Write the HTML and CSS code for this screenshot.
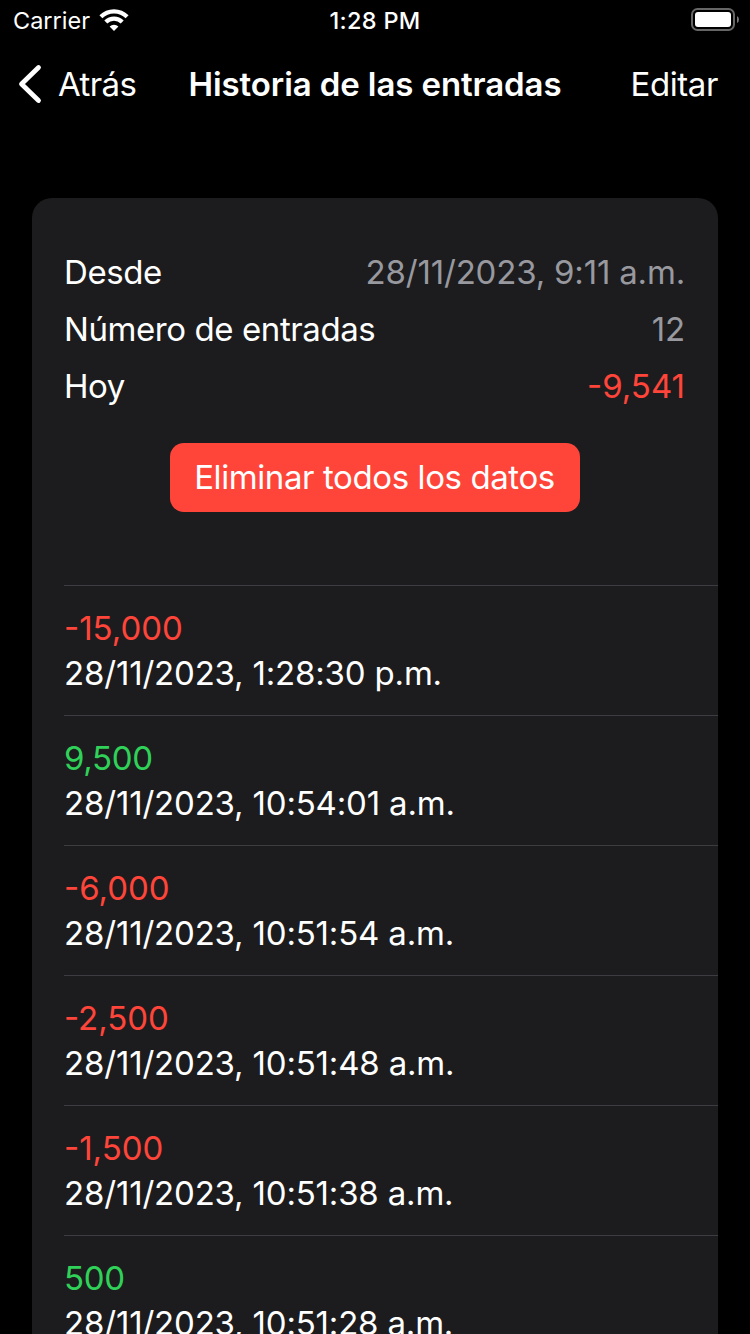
FILE: index.html
```
<!DOCTYPE html>
<html lang="es">
<head>
<meta charset="utf-8">
<title>Historia de las entradas</title>
<link rel="stylesheet" href="styles.css">
</head>
<body>
<div class="status-bar">
  <div class="carrier"><span class="carrier-name">Carrier</span>
    <svg class="wifi" width="30" height="22" viewBox="0 0 30 22" fill="none" stroke="#fff" stroke-width="4.200">
      <path d="M1.9 7.800A18.600 18.600 0 0 1 28.100 7.800"/>
      <path d="M6.800 13.100A11.600 11.600 0 0 1 23.200 13.100"/>
      <path d="M10.600 17.500A6.600 6.600 0 0 1 19.400 17.500L15 22Z" fill="#fff" stroke="none"/>
    </svg>
  </div>
  <span class="clock">1:28 PM</span>
  <svg class="battery" width="48" height="23" viewBox="0 0 48 23">
    <rect x="1" y="1" width="42" height="21" rx="5.5" fill="none" stroke="#666" stroke-width="2"/>
    <rect x="4" y="4" width="36" height="15" rx="3" fill="#fff"/>
    <path d="M46 8v7Q48 14 48 11.500T46 8Z" fill="#777"/>
  </svg>
</div>
<header class="nav">
  <a class="back">
    <svg class="chevron" width="24" height="40" viewBox="0 0 24 40" fill="none" stroke="#fff" stroke-width="4.800" stroke-linecap="round" stroke-linejoin="round"><path d="M20.500 3.500L3.500 20L20.500 36.500"/></svg>
    <span class="back-label">Atrás</span>
  </a>
  <h1 class="title">Historia de las entradas</h1>
  <a class="edit">Editar</a>
</header>
<main class="card">
  <section class="summary">
    <div class="line"><span class="label">Desde</span><span class="value">28/11/2023, 9:11 a.m.</span></div>
    <div class="line"><span class="label">Número de entradas</span><span class="value">12</span></div>
    <div class="line"><span class="label">Hoy</span><span class="negative">-9,541</span></div>
    <button class="delete">Eliminar todos los datos</button>
  </section>
  <ul class="entries">
    <li class="entry"><span class="negative">-15,000</span><span class="date">28/11/2023, 1:28:30 p.m.</span></li>
    <li class="entry"><span class="positive">9,500</span><span class="date">28/11/2023, 10:54:01 a.m.</span></li>
    <li class="entry"><span class="negative">-6,000</span><span class="date">28/11/2023, 10:51:54 a.m.</span></li>
    <li class="entry"><span class="negative">-2,500</span><span class="date">28/11/2023, 10:51:48 a.m.</span></li>
    <li class="entry"><span class="negative">-1,500</span><span class="date">28/11/2023, 10:51:38 a.m.</span></li>
    <li class="entry"><span class="positive">500</span><span class="date">28/11/2023, 10:51:28 a.m.</span></li>
  </ul>
</main>
</body>
</html>
```
FILE: styles.css
```
* { box-sizing: border-box; }
html, body { margin: 0; height: 1334px; overflow: hidden; }
body {
  width: 750px;
  display: flex;
  flex-direction: column;
  background: #000;
  color: #fff;
  font: 400 33px/45px Inter, "Liberation Sans", sans-serif;
  white-space: nowrap;
}
.status-bar {
  flex: none;
  display: grid;
  grid-template-columns: minmax(0, 1fr) auto minmax(0, 1fr);
  align-items: start;
  height: 40px;
  padding: 0 11px 0 13px;
  font-size: 23.500px;
  line-height: 42px;
}
.carrier { display: flex; align-items: flex-start; gap: 9px; }
.wifi { margin-top: 9px; }
.clock { font-weight: 500; letter-spacing: 0.3px; margin-right: 2px; }
.battery { justify-self: end; margin-top: 8px; }
.nav {
  flex: none;
  display: grid;
  grid-template-columns: minmax(0, 1fr) auto minmax(0, 1fr);
  align-items: center;
  height: 88px;
  padding: 0 18px;
}
.back { display: flex; align-items: center; gap: 16px; letter-spacing: -0.6px; }
.title { margin: 0; font-size: 33px; font-weight: 600; letter-spacing: -0.1px; }
.edit { justify-self: end; margin-right: 14px; letter-spacing: -0.4px; }
.card {
  flex: 1 0 auto;
  margin: 70px 32px 0;
  border-radius: 20px 20px 0 0;
  background: #1c1c1e;
}
.summary {
  display: flex;
  flex-direction: column;
  gap: 16px;
  height: 387px;
  padding: 54px 33px 0 32px;
  line-height: 41px;
}
.line { display: flex; justify-content: space-between; }
.label { letter-spacing: -0.42px; }
.value { color: #98989f; letter-spacing: -0.18px; }
.negative { color: #ff453a; }
.positive { color: #30d158; letter-spacing: -0.3px; }
.delete {
  align-self: center;
  width: 410px;
  height: 69px;
  margin-top: 20px;
  padding: 0;
  border: 0;
  border-radius: 14px;
  background: #ff453a;
  color: #fff;
  font: inherit;
  letter-spacing: -0.4px;
}
.entries { margin: 0; padding: 0 0 0 32px; list-style: none; }
.entry {
  display: flex;
  flex-direction: column;
  height: 130px;
  padding-top: 20px;
  border-top: 1px solid #3d3d41;
}
.date { letter-spacing: -0.18px; }
```
